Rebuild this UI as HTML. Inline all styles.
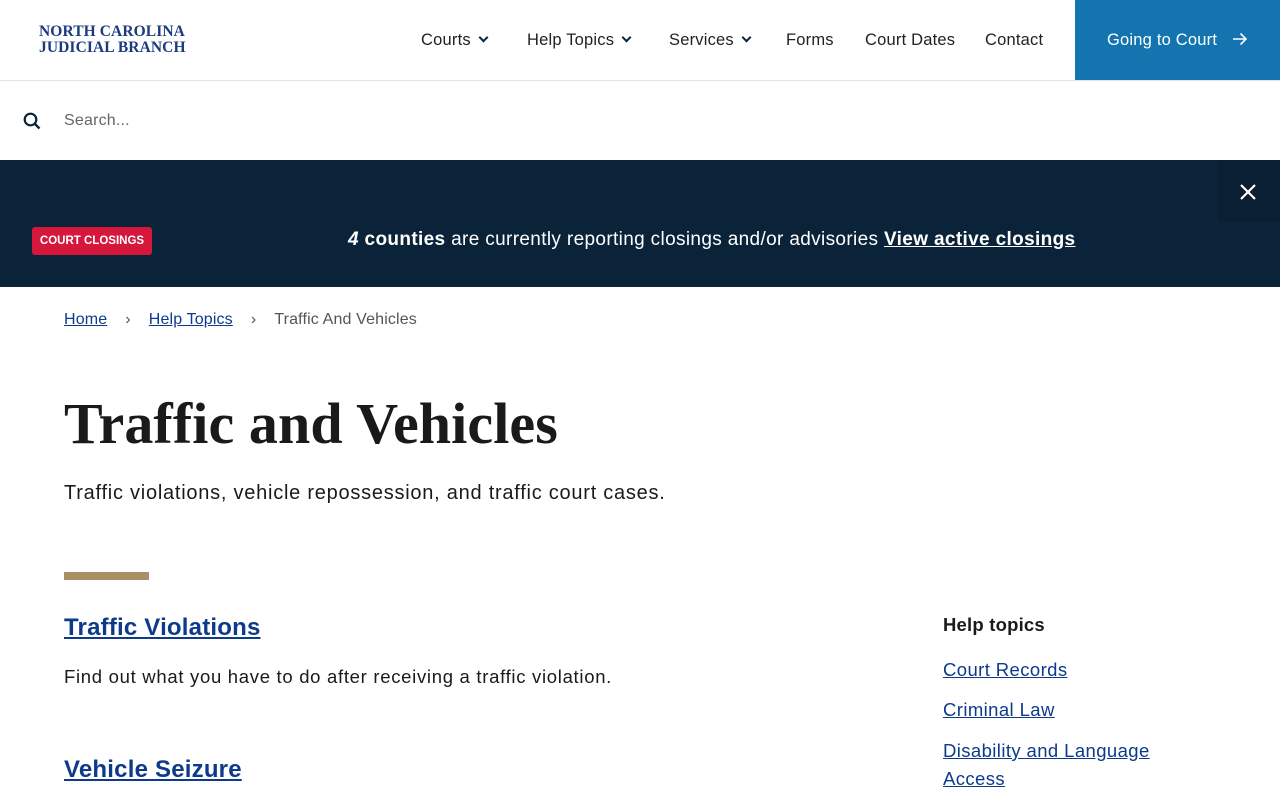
<!DOCTYPE html>
<html><head><meta charset="utf-8"><style>
*{margin:0;padding:0;box-sizing:border-box}
body{width:1280px;height:800px;overflow:hidden;background:#fff;font-family:"Liberation Sans",sans-serif;color:#1a1a1a;position:relative}
.abs{position:absolute;white-space:nowrap}
a{color:#0d3a8a}
.nav{font-size:16.5px;color:#222;top:31px;letter-spacing:0.2px}
.chev{display:inline-block;width:7px;height:7px;border-right:2px solid #0b2338;border-bottom:2px solid #0b2338;transform:rotate(45deg);margin-left:9px;position:relative;top:-4px}
</style></head><body>
<div class="abs" style="left:39px;top:24px;font-family:'Liberation Serif',serif;font-weight:bold;color:#1c3b7e;font-size:15.5px;line-height:16px;letter-spacing:0.1px">NORTH CAROLINA<br>JUDICIAL BRANCH</div>
<div class="abs nav" style="left:421px">Courts<span class="chev"></span></div>
<div class="abs nav" style="left:527px">Help Topics<span class="chev"></span></div>
<div class="abs nav" style="left:669px">Services<span class="chev"></span></div>
<div class="abs nav" style="left:786px">Forms</div>
<div class="abs nav" style="left:865px">Court Dates</div>
<div class="abs nav" style="left:985px">Contact</div>
<div class="abs" style="left:1075px;top:0;width:205px;height:80px;background:#1474b0;color:#fff;font-size:16.5px;padding:31px 0 0 32px;letter-spacing:0.2px">Going to Court <svg style="margin-left:10px;vertical-align:-1px" width="16" height="14" viewBox="0 0 16 14"><path d="M1 7h13M8.5 1.5L14 7l-5.5 5.5" fill="none" stroke="#fff" stroke-width="1.6"/></svg></div>
<div class="abs" style="left:0;top:80px;width:1280px;height:1px;background:#e3e3e3"></div>
<svg class="abs" style="left:23px;top:112px" width="18" height="18" viewBox="0 0 18 18"><circle cx="7.5" cy="7.5" r="5.8" fill="none" stroke="#0b2338" stroke-width="2.2"/><path d="M12 12l4.5 4.5" stroke="#0b2338" stroke-width="2.4"/></svg>
<div class="abs" style="left:64px;top:112px;font-size:16px;color:#666;letter-spacing:0.2px">Search...</div>
<div class="abs" style="left:0;top:160px;width:1280px;height:127px;background:#0b2338"></div>
<div class="abs" style="left:1218px;top:160px;width:62px;height:62px;background:#0a1f32"></div>
<svg class="abs" style="left:1239px;top:183px" width="18" height="18"><path d="M2 2L16 16M16 2L2 16" stroke="#fff" stroke-width="2.2"/></svg>
<div class="abs" style="left:32px;top:227px;width:120px;height:28px;background:#d5173c;border-radius:3px;color:#fff;font-weight:bold;font-size:11.5px;text-align:center;line-height:28px">COURT CLOSINGS</div>
<div class="abs" style="left:348px;top:229px;color:#fff;font-size:19px;letter-spacing:0.35px"><b><i>4</i> counties</b> are currently reporting closings and/or advisories <b><u>View active closings</u></b></div>
<div class="abs" style="left:64px;top:311px;font-size:16px;color:#555;letter-spacing:0.15px"><a href="#">Home</a><span style="margin:0 18px">›</span><a href="#">Help Topics</a><span style="margin:0 18px">›</span>Traffic And Vehicles</div>
<div class="abs" style="left:64px;top:390px;font-family:'Liberation Serif',serif;font-weight:bold;font-size:58px;color:#1a1a1a;letter-spacing:0.1px">Traffic and Vehicles</div>
<div class="abs" style="left:64px;top:482px;font-size:20px;letter-spacing:0.75px">Traffic violations, vehicle repossession, and traffic court cases.</div>
<div class="abs" style="left:64px;top:572px;width:85px;height:8px;background:#a88f6a"></div>
<div class="abs" style="left:64px;top:614px;font-size:24px;font-weight:bold;letter-spacing:0.2px"><a href="#" style="color:#0d3a8a">Traffic Violations</a></div>
<div class="abs" style="left:64px;top:666px;font-size:18.5px;letter-spacing:0.7px">Find out what you have to do after receiving a traffic violation.</div>
<div class="abs" style="left:64px;top:756px;font-size:24px;font-weight:bold;letter-spacing:0.2px"><a href="#" style="color:#0d3a8a">Vehicle Seizure</a></div>
<div class="abs" style="left:943px;top:614px;font-size:18.5px;font-weight:bold;letter-spacing:0.2px">Help topics</div>
<div class="abs" style="left:943px;top:656px;font-size:18.5px;line-height:28px;letter-spacing:0.4px"><a href="#">Court Records</a></div>
<div class="abs" style="left:943px;top:696px;font-size:18.5px;line-height:28px;letter-spacing:0.4px"><a href="#">Criminal Law</a></div>
<div class="abs" style="left:943px;top:737px;font-size:18.5px;line-height:28px;letter-spacing:0.4px"><a href="#">Disability and Language<br>Access</a></div>
</body></html>
